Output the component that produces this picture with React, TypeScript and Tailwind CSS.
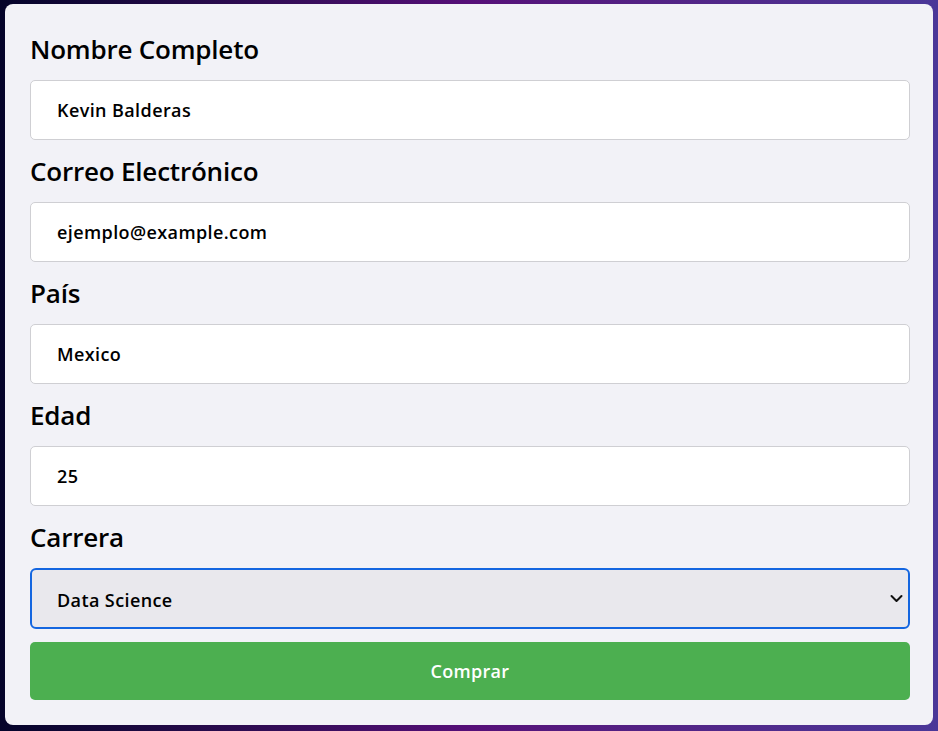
import React from "react";

const fields = [
  { label: "Nombre Completo", value: "Kevin Balderas" },
  { label: "Correo Electrónico", value: "ejemplo@example.com" },
  { label: "País", value: "Mexico" },
  { label: "Edad", value: "25" },
];

export default function App() {
  return (
    <div className="w-[938px] h-[731px] bg-gradient-to-r from-[#05042a] via-[#560f78] to-[#4a3798] pt-[4px] pl-[5px] pr-[5px] font-['Open_Sans',sans-serif]">
      <div className="w-[928px] h-[721px] bg-[#f2f2f7] rounded-[8px] pl-[25px] pr-[23px] pt-[30px] flex flex-col">
        {fields.map((f, i) => (
          <div key={f.label} className={i === 0 ? "" : "mt-[16px]"}>
            <div className="text-[26px] leading-[31px] tracking-[-0.2px] text-black font-semibold mb-[15px]">{f.label}</div>
            <div className="h-[60px] bg-white border border-[#cfcfd3] rounded-[5px] flex items-center pl-[26px] text-[18px] tracking-[0.4px] font-semibold text-black">
              {f.value}
            </div>
          </div>
        ))}
        <div className="mt-[16px]">
          <div className="text-[26px] leading-[31px] tracking-[-0.2px] text-black font-semibold mb-[15px]">Carrera</div>
          <div className="h-[61px] bg-[#e9e8ed] border-2 border-[#1466e0] rounded-[6px] flex items-center justify-between pl-[25px] pr-[5px] text-[18px] tracking-[0.4px] font-semibold text-black">
            <span className="mt-[3px]">Data Science</span>
            <svg width="13" height="9" viewBox="0 0 13 9" fill="none">
              <path d="M1.5 2 L6.5 7 L11.5 2" stroke="#111" strokeWidth="2" strokeLinecap="round" strokeLinejoin="round" />
            </svg>
          </div>
        </div>
        <div className="mt-[13px] h-[58px] bg-[#4caf50] rounded-[5px] flex items-center justify-center text-white text-[18px] tracking-[0.3px] font-semibold">
          Comprar
        </div>
      </div>
    </div>
  );
}
